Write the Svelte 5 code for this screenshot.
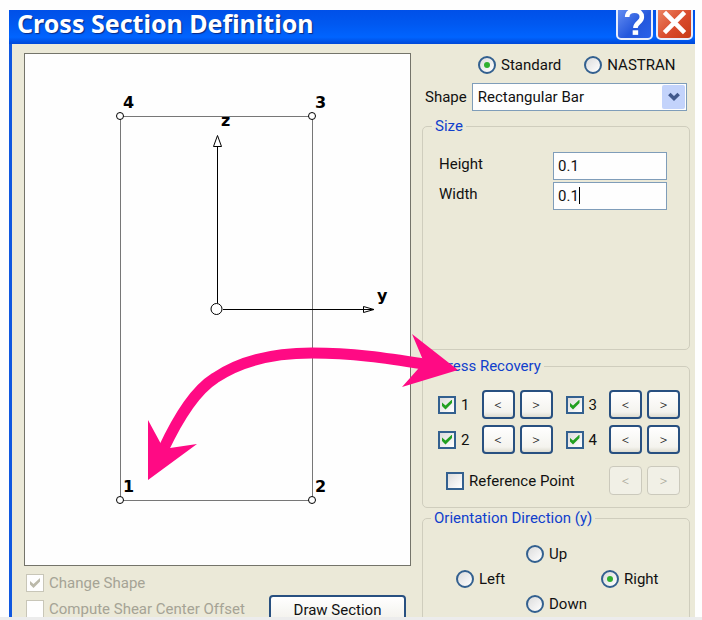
<script>
  let mode = "standard";
  let shape = "Rectangular Bar";
  let height = "0.1";
  let width = "0.1";
  let direction = "right";
  let changeShape = true;
  let shearOffset = false;
  let reference = false;

  // listed in the order they fill the two column grid
  let points = [
    { id: 1, on: true },
    { id: 3, on: true },
    { id: 2, on: true },
    { id: 4, on: true },
  ];

  let corners = [
    { id: 4, x: 120, y: 116 },
    { id: 3, x: 312, y: 116 },
    { id: 1, x: 120, y: 500 },
    { id: 2, x: 312, y: 500 },
  ];
</script>

<div class="page">
  <div class="dialog">
    <header class="titlebar">
      <h1>Cross Section Definition</h1>
      <div class="winButtons">
        <button class="win help" aria-label="Help">
          <svg viewBox="0 0 36 36">
            <path d="M10 12c0-5 4-7 8-7 5 0 8 3 8 7 0 6-7 6-7 12" />
            <path d="M16 29h6" />
          </svg>
        </button>
        <button class="win close" aria-label="Close">
          <svg viewBox="0 0 36 36">
            <path d="M7 7L29 29M29 7L7 29" />
          </svg>
        </button>
      </div>
    </header>

    <main class="body">
      <section class="left">
        <div class="canvas">
          <svg class="drawing" viewBox="25 54 385 511">
            <path class="outline" d="M120.500 116.500H312.500V500.500H120.500Z" />
            <path class="axis" d="M217.500 147V303M223 309.500H364" />
            <path class="head" d="M217.500 135.500L221.500 146.500H213.500Z" />
            <path class="head" d="M374 309.500L363.500 306.500V312.500ZM364 309.500H374" />
            <circle class="node" cx="216.500" cy="309" r="5.500" />
            {#each corners as c}
              <circle class="node" cx={c.x} cy={c.y} r="3.500" />
              <text x={c.x + 3} y={c.y - 8}>{c.id}</text>
            {/each}
            <text x="221" y="126">z</text>
            <text x="377" y="301">y</text>
          </svg>
          <svg class="pointer" viewBox="25 54 385 511">
            <path
              class="curve"
              d="M163 450C180 414 196 390 215 378C243 359 276 353 312 353C352 353 386 358 424 364"
            />
            <path d="M458 370L412 334L423 360L418 369L402 387Z" />
            <path d="M148 480L148 420L161 444L170 448L197 444Z" />
          </svg>
        </div>
        <div class="footer">
          <div class="options">
            <label class="field off">
              <input type="checkbox" bind:checked={changeShape} disabled />
              Change Shape
            </label>
            <label class="field off">
              <input type="checkbox" bind:checked={shearOffset} disabled />
              Compute Shear Center Offset
            </label>
          </div>
          <button class="button draw">Draw Section</button>
        </div>
      </section>

      <section class="right">
        <div class="modes">
          <label class="field">
            <input type="radio" bind:group={mode} value="standard" />
            Standard
          </label>
          <label class="field">
            <input type="radio" bind:group={mode} value="nastran" />
            NASTRAN
          </label>
        </div>
        <div class="shape">
          <label for="shape">Shape</label>
          <div class="combo">
            <select id="shape" bind:value={shape}>
              <option>Rectangular Bar</option>
            </select>
            <span class="arrow">
              <svg viewBox="0 0 12 10"><path d="M2 2.500L6 6.500L10 2.500" /></svg>
            </span>
          </div>
        </div>

        <fieldset class="size">
          <legend>Size</legend>
          <div class="row">
            <label for="height">Height</label>
            <div class="box"><input id="height" type="text" bind:value={height} /></div>
          </div>
          <div class="row">
            <label for="width">Width</label>
            <div class="box">
              <input id="width" type="text" bind:value={width} />
              <span class="caret"></span>
            </div>
          </div>
        </fieldset>

        <fieldset class="stress">
          <legend>Stress Recovery</legend>
          <div class="points">
            {#each points as p}
              <div class="point">
                <label class="field">
                  <input type="checkbox" bind:checked={p.on} />
                  {p.id}
                </label>
                <button class="button step" aria-label="Previous">&lt;</button>
                <button class="button step" aria-label="Next">&gt;</button>
              </div>
            {/each}
          </div>
          <div class="point reference">
            <label class="field">
              <input type="checkbox" bind:checked={reference} />
              Reference Point
            </label>
            <button class="button step" aria-label="Previous" disabled>&lt;</button>
            <button class="button step" aria-label="Next" disabled>&gt;</button>
          </div>
        </fieldset>

        <fieldset class="orientation">
          <legend>Orientation Direction (y)</legend>
          <div class="compass">
            <label class="field up">
              <input type="radio" bind:group={direction} value="up" />
              Up
            </label>
            <label class="field west">
              <input type="radio" bind:group={direction} value="left" />
              Left
            </label>
            <label class="field east">
              <input type="radio" bind:group={direction} value="right" />
              Right
            </label>
            <label class="field down">
              <input type="radio" bind:group={direction} value="down" />
              Down
            </label>
          </div>
        </fieldset>
      </section>
    </main>
  </div>
</div>

<style>
  :global(body) {
    background: #fefefe;
  }
  .page {
    box-sizing: border-box;
    height: 100vh;
    display: flex;
    padding: 10px 7px 0 9px;
    border-bottom: 3px solid #ececec;
    overflow: hidden;
    font-family: Roboto, "Liberation Sans", sans-serif;
    font-size: 15px;
    line-height: 24px;
    color: #111;
  }
  .dialog {
    flex: 1;
    min-width: 0;
    background: #ebe9d8;
    border-left: 3px solid #1058e0;
  }
  .titlebar {
    display: flex;
    justify-content: space-between;
    height: 34px;
    margin-left: -3px;
    padding: 0 2px 0 8px;
    background: linear-gradient(#0050e8, #0058f0 40%, #0064ff 80%, #0048d8);
  }
  h1 {
    margin: 0;
    color: white;
    font-family: "Noto Sans", sans-serif;
    font-size: 25px;
    line-height: 26px;
    font-weight: 700;
    text-shadow: 1px 1px 1px #0a2a80;
    white-space: nowrap;
  }
  .winButtons {
    display: flex;
    align-items: flex-end;
    gap: 3px;
    height: 30px;
    overflow: hidden;
  }
  .win {
    box-sizing: border-box;
    width: 37px;
    height: 36px;
    padding: 0;
    border: 2px solid #e8eefc;
    border-radius: 5px;
  }
  .win svg {
    display: block;
    width: 100%;
    fill: none;
    stroke: white;
    stroke-width: 5;
  }
  .help {
    background: linear-gradient(135deg, #6a93f4, #2457dc 60%, #2a62ea);
  }
  .close {
    background: linear-gradient(135deg, #ee8a68, #d8492a 60%, #c83c18);
  }
  .body {
    display: grid;
    grid-template-columns: 1fr 268px;
    gap: 11px;
    padding: 9px 5px 0 12px;
  }
  .canvas {
    position: relative;
    border: 1px solid #74746a;
    background: #fefefe;
  }
  .drawing {
    display: block;
    width: 100%;
  }
  .drawing text {
    font-family: "DejaVu Sans", sans-serif;
    font-size: 16px;
    font-weight: 700;
  }
  .outline {
    fill: none;
    stroke: #777;
  }
  .axis {
    stroke: black;
  }
  .head,
  .node {
    fill: white;
    stroke: black;
  }
  .pointer {
    position: absolute;
    inset: 0;
    z-index: 1;
    overflow: visible;
    pointer-events: none;
    fill: #ff0a84;
  }
  .curve {
    fill: none;
    stroke: #ff0a84;
    stroke-width: 11;
  }
  .footer {
    display: flex;
    justify-content: space-between;
    align-items: flex-end;
    padding: 4px 5px 0 2px;
  }
  .field {
    display: flex;
    align-items: center;
    gap: 5px;
    white-space: nowrap;
  }
  .options .field {
    height: 26px;
  }
  .off {
    color: #a5a395;
  }
  input[type="checkbox"],
  input[type="radio"] {
    appearance: none;
    box-sizing: border-box;
    display: grid;
    place-items: center;
    flex: none;
    width: 18px;
    height: 18px;
    margin: 0;
    border: 2px solid #33608f;
    background: linear-gradient(135deg, #dcdcdc, #fff);
  }
  input[type="radio"] {
    border-radius: 50%;
  }
  input[type="radio"]:checked::before {
    content: "";
    width: 6px;
    height: 6px;
    border-radius: 50%;
    background: #30b030;
  }
  input[type="checkbox"]:checked::before {
    content: "";
    width: 10px;
    height: 10px;
    background: #22a022;
    clip-path: polygon(0 30%, 35% 60%, 100% 0, 100% 35%, 35% 100%, 0 65%);
  }
  input[type="checkbox"]:disabled {
    border: 1px solid #c8c6b8;
    background: #fefefe;
  }
  input[type="checkbox"]:disabled::before {
    background: #bbb9aa;
  }
  .button {
    box-sizing: border-box;
    height: 29px;
    padding: 0;
    border: 2px solid #285080;
    border-radius: 4px;
    background: linear-gradient(#fff, #f4f3ee 80%, #dedcd0);
    color: #111;
    font: inherit;
  }
  .draw {
    width: 137px;
    margin-bottom: -2px;
  }
  .step {
    flex: none;
    width: 33px;
    font-weight: 300;
  }
  .step:disabled {
    border: 1px solid #cbc9bc;
    background: #f1f0e6;
    color: #aaa89a;
  }
  .modes {
    display: flex;
    gap: 23px;
    padding-left: 56px;
  }
  .shape {
    display: flex;
    align-items: center;
    gap: 5px;
    padding: 6px 3px 7px 3px;
  }
  .combo {
    display: grid;
    flex: 1;
  }
  select,
  .arrow {
    grid-area: 1 / 1;
  }
  select {
    appearance: none;
    box-sizing: border-box;
    width: 100%;
    height: 28px;
    padding: 0 5px;
    border: 1px solid #7f9db9;
    border-radius: 0;
    background: #fefefe;
    color: #111;
    font: inherit;
  }
  .arrow {
    display: grid;
    place-items: center;
    justify-self: end;
    width: 23px;
    margin: 2px;
    border-radius: 2px;
    background: #c3d3fb;
    pointer-events: none;
  }
  .arrow svg {
    width: 14px;
    fill: none;
    stroke: #40588c;
    stroke-width: 3;
  }
  fieldset {
    min-width: 0;
    margin: 0 0 2px;
    padding: 0 9px 12px 15px;
    border: 1px solid #cfcdbd;
    border-radius: 5px;
  }
  legend {
    margin-left: -7px;
    padding: 0 3px;
    color: #1040cc;
    line-height: 16px;
  }
  .size {
    margin-bottom: 8px;
    padding: 18px 22px 137px 16px;
  }
  .row {
    display: flex;
    justify-content: space-between;
    margin-bottom: 2px;
  }
  .box {
    position: relative;
  }
  input[type="text"] {
    box-sizing: border-box;
    display: block;
    width: 114px;
    height: 28px;
    padding: 0 4px;
    border: 1px solid #7f9db9;
    background: #fefefe;
    color: #111;
    font: inherit;
  }
  .caret {
    position: absolute;
    left: 26px;
    top: 5px;
    width: 1px;
    height: 17px;
    background: black;
  }
  .stress {
    padding-top: 16px;
  }
  .points {
    display: grid;
    grid-template-columns: 1fr 1fr;
    gap: 6px 13px;
  }
  .point {
    display: flex;
    align-items: center;
    gap: 5px;
  }
  .point .field {
    flex: 1;
  }
  .reference {
    padding: 12px 0 0 8px;
  }
  .compass {
    display: grid;
    grid-template-columns: 70px 75px 1fr;
    row-gap: 1px;
    padding: 16px 0 0 18px;
  }
  .up {
    grid-area: 1 / 2;
  }
  .west {
    grid-area: 2 / 1;
  }
  .east {
    grid-area: 2 / 3;
  }
  .down {
    grid-area: 3 / 2;
  }
</style>
